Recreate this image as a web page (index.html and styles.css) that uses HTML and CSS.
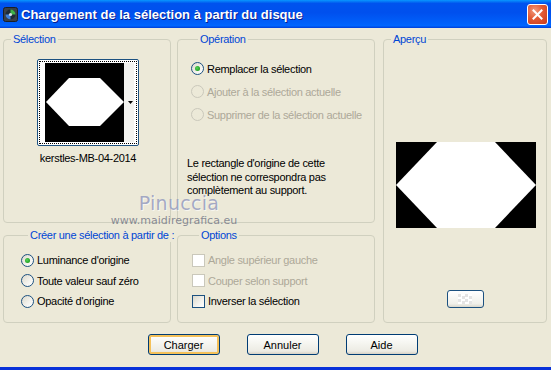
FILE: index.html
```html
<!DOCTYPE html>
<html lang="fr">
<head>
  <meta charset="UTF-8" />
  <title>Chargement de la sélection à partir du disque</title>
  <link rel="stylesheet" href="styles.css">
</head>
<body>

  <div class="window">
    <div class="titlebar">
      <svg class="app-icon" width="15" height="15" viewBox="0 0 15 15">
        <rect x="0.5" y="0.5" width="14" height="14" rx="2" fill="#3a4048" stroke="#1b1f24"/>
        <circle cx="7.5" cy="7.5" r="5" fill="#1d2b38"/>
        <path d="M7.5 2.5 A5 5 0 0 1 12.5 7.5 L7.5 7.5 Z" fill="#3fb24a"/>
        <path d="M7.5 7.5 L7.5 12.5 A5 5 0 0 1 2.5 7.5 Z" fill="#3d7fd6"/>
        <circle cx="7.5" cy="7.5" r="1.6" fill="#d8dde2"/>
      </svg>
      <span class="title">Chargement de la sélection à partir du disque</span>
      <button class="close" aria-label="Fermer">
        <svg width="11" height="11" viewBox="0 0 11 11">
          <path d="M1.5 1.5 L9.5 9.5 M9.5 1.5 L1.5 9.5" stroke="#fff" stroke-width="2" stroke-linecap="square"/>
        </svg>
      </button>
    </div>

    <div class="content">
      <div class="groups">
        <fieldset class="group group-selection">
          <legend>Sélection</legend>
          <div class="thumb-picker">
            <div class="thumb-focus">
              <svg class="thumb" width="79" height="79" viewBox="0 0 79 79">
                <rect width="79" height="79" fill="#000"/>
                <polygon points="1,39 24,15 55,15 79,39 55,63 24,63" fill="#fff"/>
              </svg>
              <div class="thumb-drop">
                <svg width="5" height="3" viewBox="0 0 5 3"><polygon points="0,0 5,0 2.5,3" fill="#000"/></svg>
              </div>
            </div>
          </div>
          <div class="thumb-name">kerstles-MB-04-2014</div>
        </fieldset>

        <fieldset class="group group-operation">
          <legend>Opération</legend>
          <label class="row"><span class="radio checked"></span>Remplacer la sélection</label>
          <label class="row disabled"><span class="radio"></span>Ajouter à la sélection actuelle</label>
          <label class="row disabled"><span class="radio"></span>Supprimer de la sélection actuelle</label>
          <p class="note">Le rectangle d'origine de cette<br>sélection ne correspondra pas<br>complètement au support.</p>
        </fieldset>

        <fieldset class="group group-preview">
          <legend>Aperçu</legend>
          <svg class="preview" width="140" height="86" viewBox="0 0 140 86">
            <rect width="140" height="86" fill="#000"/>
            <polygon points="0,43 41,0 99,0 140,43 99,86 41,86" fill="#fff"/>
          </svg>
          <button class="mini-btn" aria-label="Fond">
            <span class="checker"></span>
          </button>
        </fieldset>

        <fieldset class="group group-create">
          <legend>Créer une sélection à partir de :</legend>
          <label class="row"><span class="radio checked"></span>Luminance d'origine</label>
          <label class="row"><span class="radio"></span>Toute valeur sauf zéro</label>
          <label class="row"><span class="radio"></span>Opacité d'origine</label>
        </fieldset>

        <fieldset class="group group-options">
          <legend>Options</legend>
          <label class="row disabled"><span class="check"></span>Angle supérieur gauche</label>
          <label class="row disabled"><span class="check"></span>Couper selon support</label>
          <label class="row"><span class="check"></span>Inverser la sélection</label>
        </fieldset>
      </div>

      <div class="buttons">
        <button class="btn default">Charger</button>
        <button class="btn">Annuler</button>
        <button class="btn">Aide</button>
      </div>
    </div>

    <div class="watermark">
      <span class="wm-name">Pinuccia</span>
      <span class="wm-site">www.maidiregrafica.eu</span>
    </div>
  </div>

</body>
</html>
```

FILE: styles.css
```css
* {
  margin: 0;
  padding: 0;
  box-sizing: border-box;
}

html, body {
  width: 551px;
  height: 370px;
  overflow: hidden;
}

body {
  font-family: 'Liberation Sans', Arial, sans-serif;
  font-size: 11px;
  letter-spacing: -0.3px;
  color: #000;
  background: #ece9d8;
}

.window {
  position: relative;
  width: 551px;
  height: 370px;
  display: flex;
  flex-direction: column;
  background: #ece9d8;
  border-bottom: 3px solid #0831d9;
}

/* barre de titre */
.titlebar {
  height: 28px;
  flex: none;
  display: flex;
  align-items: center;
  padding: 0 3px 0 3px;
  background: linear-gradient(to bottom, #0997ff 0, #0053ee 12%, #0050ee 45%, #0061fb 85%, #0066ff 92%, #003dd7 100%);
}

.app-icon {
  flex: none;
  margin-right: 3px;
}

.title {
  flex: 1;
  color: #fff;
  font-family: 'Liberation Sans', Arial, sans-serif;
  font-weight: bold;
  font-size: 13px;
  letter-spacing: 0;
  text-shadow: 1px 1px 0 #0a1e8f;
}

.close {
  width: 21px;
  height: 21px;
  border: 1px solid #fff;
  border-radius: 3px;
  background: radial-gradient(circle at 35% 30%, #f19a7c 0, #e25a34 45%, #c8391a 100%);
  display: flex;
  align-items: center;
  justify-content: center;
}

/* contenu */
.content {
  flex: 1;
  display: flex;
  flex-direction: column;
  padding: 5px 3px 0 3px;
}

.groups {
  display: grid;
  grid-template-columns: 168px 198px 166px;
  grid-template-rows: 190px 94px;
  column-gap: 6px;
  row-gap: 6px;
}

.group {
  border: 1px solid #d0d0bf;
  border-radius: 4px;
  min-width: 0;
  padding: 0;
  margin: 0;
}

.group legend {
  margin-left: 7px;
  padding: 0 2px;
  color: #0046d5;
  line-height: 13px;
  white-space: nowrap;
}

.group-selection { grid-column: 1; grid-row: 1; }
.group-operation { grid-column: 2; grid-row: 1; padding: 11px 0 0 13px; }
.group-preview   { grid-column: 3; grid-row: 1 / 3; margin-left: 2px; }
.group-create    { grid-column: 1; grid-row: 2; padding: 8px 0 0 17px; }
.group-options   { grid-column: 2; grid-row: 2; padding: 8px 0 0 14px; }

/* vignette */
.thumb-picker {
  width: 102px;
  height: 87px;
  margin: 13px auto 0 auto;
  position: relative;
  left: 1px;
  border: 1px solid #1c5180;
  border-radius: 2px;
  background: #fff;
  padding: 1px;
}

.thumb-focus {
  height: 100%;
  border: 1px dotted #000;
  display: flex;
  padding: 1px 2px 1px 5px;
}

.thumb {
  display: block;
  flex: none;
}

.thumb-drop {
  flex: 1;
  background: #f3f3f0;
  display: flex;
  align-items: center;
  justify-content: flex-end;
  padding-right: 1px;
}

.thumb-name {
  text-align: center;
  margin-top: 6px;
  line-height: 13px;
  padding-left: 2px;
}

/* lignes radio / case */
.row {
  height: 23px;
  display: flex;
  align-items: center;
  gap: 3px;
  white-space: nowrap;
}

.group-create .row,
.group-options .row {
  height: 20.5px;
}

.row.disabled {
  color: #aca899;
}

.radio {
  width: 13px;
  height: 13px;
  flex: none;
  border-radius: 50%;
  border: 1px solid #1c5180;
  background: linear-gradient(135deg, #dcd9cb 0, #f4f3ee 60%, #fff 100%);
  display: flex;
  align-items: center;
  justify-content: center;
}

.radio.checked::after {
  content: '';
  width: 5px;
  height: 5px;
  border-radius: 50%;
  background: radial-gradient(circle at 40% 40%, #55d35a 0, #21a121 70%);
}

.row.disabled .radio {
  border-color: #cac8bb;
  background: #ece9d8;
}

.check {
  width: 13px;
  height: 13px;
  flex: none;
  border: 1px solid #1c5180;
  background: linear-gradient(135deg, #dcd9cb 0, #f4f3ee 60%, #fff 100%);
}

.row.disabled .check {
  border-color: #cac8bb;
  background: #fff;
}

.note {
  margin-top: 31px;
  margin-left: -4px;
  line-height: 13.5px;
}

/* aperçu */
.preview {
  display: block;
  margin: 96px auto 0 auto;
  position: relative;
  left: 1px;
}

.mini-btn {
  display: flex;
  align-items: center;
  justify-content: center;
  width: 37px;
  height: 18px;
  margin: 62px auto 0 auto;
  border: 1px solid #1c5180;
  border-radius: 3px;
  background: linear-gradient(to bottom, #fff 0, #f0f0ea 80%, #d8d6cc 100%);
}

.checker {
  width: 14px;
  height: 10px;
  background: conic-gradient(#fff 25%, #e4e4e4 0 50%, #fff 0 75%, #e4e4e4 0);
  background-size: 7px 5px;
}

/* boutons */
.buttons {
  display: flex;
  justify-content: center;
  gap: 27px;
  margin-top: 11px;
  padding-left: 14px;
}

.btn {
  width: 72px;
  height: 21px;
  font-family: 'Liberation Sans', Arial, sans-serif;
  font-size: 11px;
  letter-spacing: 0;
  color: #000;
  border: 1px solid #003c74;
  border-radius: 3px;
  background: linear-gradient(to bottom, #fff 0, #f6f6f1 40%, #ecebe3 85%, #d6d0c5 100%);
}

.btn.default {
  box-shadow: inset 0 0 0 2px #f5c159;
}

/* filigrane */
.watermark {
  position: absolute;
  left: 112px;
  top: 192px;
  width: 124px;
  display: flex;
  flex-direction: column;
  align-items: center;
  pointer-events: none;
}

.wm-name {
  font-family: 'DejaVu Sans', sans-serif;
  font-size: 19px;
  letter-spacing: 0.3px;
  color: rgba(150, 156, 190, 0.85);
  text-shadow: 1px 1px 0 rgba(255, 255, 255, 0.6);
  line-height: 22px;
  padding-left: 10px;
}

.wm-site {
  font-family: 'DejaVu Sans', sans-serif;
  font-size: 11px;
  letter-spacing: 0;
  color: rgba(110, 114, 130, 0.8);
  line-height: 13px;
}
```
